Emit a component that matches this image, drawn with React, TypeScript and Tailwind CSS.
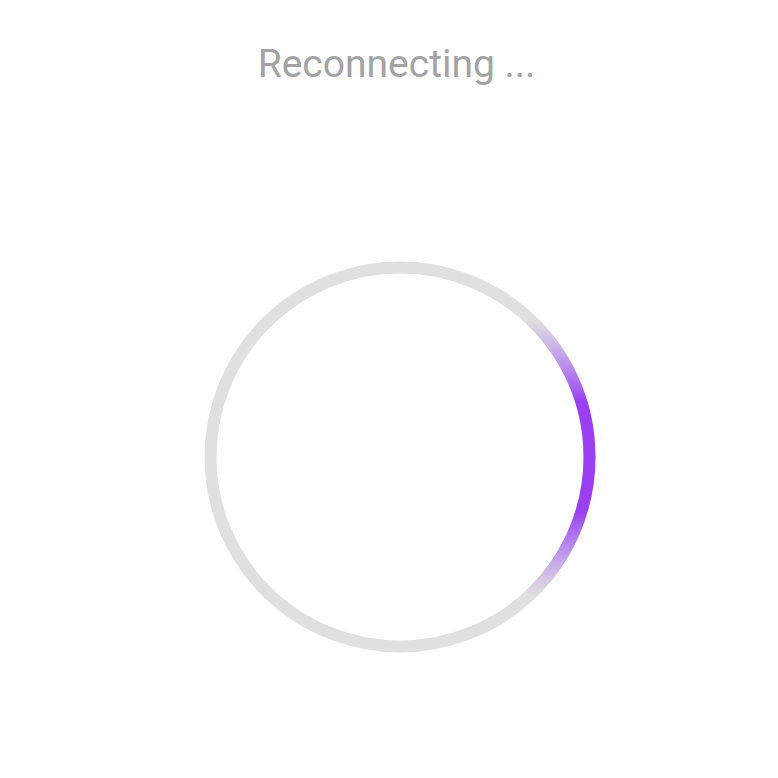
export default function App() {
  const cx = 200;
  const cy = 200;
  const r = 189.5;
  const a = (47 * Math.PI) / 180;
  const x1 = cx + r * Math.cos(a);
  const y1 = cy - r * Math.sin(a);
  const y2 = cy + r * Math.sin(a);

  return (
    <div className="flex h-[778px] w-[778px] flex-col items-center bg-white pt-[45px] font-['Roboto',sans-serif]">
      <div className="ml-[15px] text-[39px] leading-none text-[#a3a3a3]">Reconnecting ...</div>

      {/* anillo de carga */}
      <svg width="400" height="400" viewBox="0 0 400 400" className="ml-[22px] mt-[173px]">
        <defs>
          <linearGradient id="arco" gradientUnits="userSpaceOnUse" x1="0" y1={y1} x2="0" y2={y2}>
            <stop offset="0" stopColor="#b07cf0" stopOpacity="0" />
            <stop offset="0.14" stopColor="#a866f2" stopOpacity="0.55" />
            <stop offset="0.3" stopColor="#9a40f2" stopOpacity="1" />
            <stop offset="0.7" stopColor="#9a40f2" stopOpacity="1" />
            <stop offset="0.86" stopColor="#a866f2" stopOpacity="0.55" />
            <stop offset="1" stopColor="#b07cf0" stopOpacity="0" />
          </linearGradient>
        </defs>
        <circle cx={cx} cy={cy} r={r} fill="none" stroke="#e0e0e0" strokeWidth="12" />
        <path
          d={`M ${x1} ${y1} A ${r} ${r} 0 0 1 ${x1} ${y2}`}
          fill="none"
          stroke="url(#arco)"
          strokeWidth="12"
        />
      </svg>
    </div>
  );
}
